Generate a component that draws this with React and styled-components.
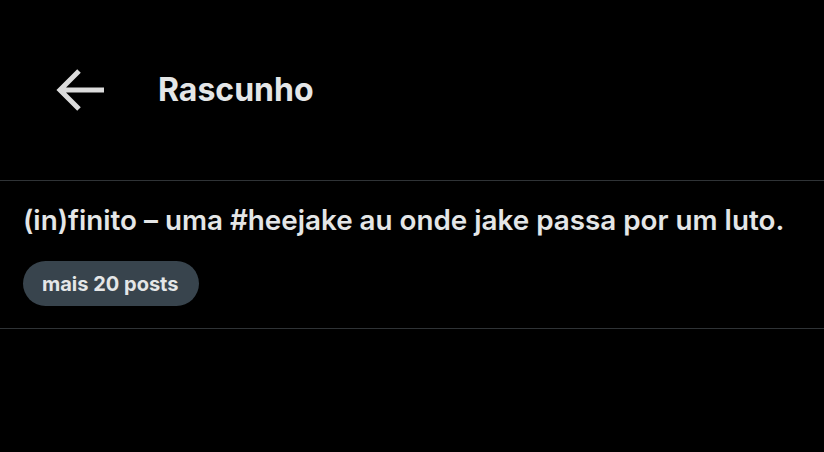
import styled, { createGlobalStyle } from "styled-components";

const Global = createGlobalStyle`
  html, body {
    margin: 0;
    padding: 0;
    background: #000;
  }
  body {
    font-family: "Inter", "Roboto", sans-serif;
    color: #e4e6e7;
  }
`;

const Page = styled.div`
  width: 824px;
  height: 452px;
  background: #000;
  display: flex;
  flex-direction: column;
`;

const Header = styled.div`
  height: 180px;
  display: flex;
  align-items: center;
  padding-left: 52px;
  box-sizing: border-box;
`;

const BackButton = styled.button`
  width: 56px;
  height: 48px;
  padding: 0;
  border: none;
  background: transparent;
  color: #dcdcdc;
  display: flex;
  align-items: center;
  justify-content: center;
  margin-right: 50px;
  margin-top: 0;
  cursor: pointer;
`;

const Title = styled.h1`
  margin: 0;
  margin-top: -2px;
  font-size: 32px;
  font-weight: 700;
`;

const Divider = styled.div`
  height: 1px;
  background: #2f3336;
`;

const Draft = styled.div`
  padding: 21px 23px 22px;
  display: flex;
  flex-direction: column;
  align-items: flex-start;
  gap: 23px;
`;

const DraftText = styled.p`
  margin: 0;
  font-size: 27.8px;
  font-weight: 600;
  line-height: 36px;
`;

const Pill = styled.span`
  display: inline-flex;
  align-items: center;
  height: 45px;
  padding: 0 20px 0 19px;
  border-radius: 23px;
  background: #38444d;
  font-size: 20px;
  font-weight: 700;
  color: #e4e6e7;
`;

const BackArrow = () => (
  <svg width="52" height="46" viewBox="0 0 52 46" fill="none">
    <path
      d="M50 23H6M25 4L6 23l19 19"
      stroke="currentColor"
      strokeWidth="5"
    />
  </svg>
);

export default function App() {
  return (
    <Page>
      <Global />
      <Header>
        <BackButton aria-label="Voltar">
          <BackArrow />
        </BackButton>
        <Title>Rascunho</Title>
      </Header>
      <Divider />
      <Draft>
        <DraftText>(in)finito – uma #heejake au onde jake passa por um luto.</DraftText>
        <Pill>mais 20 posts</Pill>
      </Draft>
      <Divider />
    </Page>
  );
}
